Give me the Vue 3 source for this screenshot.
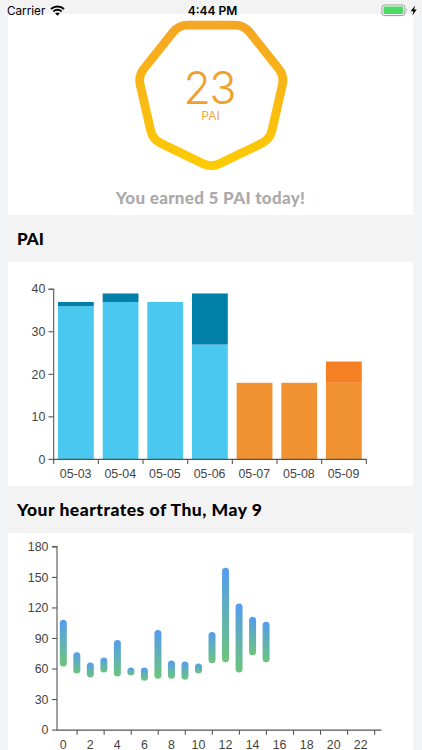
<template>
  <div class="screen">
    <header class="status-bar">
      <div class="carrier">
        <span>Carrier</span>
        <svg class="wifi" width="15" height="11.5" viewBox="0 0 14 11">
          <path d="M0.8 3.9a8.9 8.9 0 0 1 12.4 0" />
          <path d="M3.1 6.2a5.6 5.6 0 0 1 7.8 0" />
          <path class="wifi-dot" d="M4.8 8.1a3.2 3.2 0 0 1 4.4 0L7 10.4z" />
        </svg>
      </div>
      <span class="clock">4:44 PM</span>
      <svg class="battery" width="37" height="14" viewBox="0 0 37 14">
        <rect x="0.9" y="2" width="23" height="10.6" rx="2.6" fill="#fff" stroke="#999" />
        <rect x="2.5" y="3.6" width="19.8" height="7.4" rx="1.2" fill="#4cd964" />
        <path d="M25.3 5.6q1.4 1.5 0 3.4z" fill="#999" />
        <path d="M34.2 2.5 29.6 8.3h2.8l-1.1 4.2 4.4-5.9h-2.7z" fill="#000" />
      </svg>
    </header>

    <section class="card score">
      <svg width="405" height="168" viewBox="0 0 405 168">
        <defs>
          <linearGradient id="ring" x1="0" y1="0" x2="0" y2="1">
            <stop offset="0" stop-color="#f5a623" />
            <stop offset="1" stop-color="#fdcb04" />
          </linearGradient>
        </defs>
        <path :d="heptagon" fill="none" stroke="url(#ring)" stroke-width="8.8" />
        <text class="score-value" x="175.4" y="90.3" textLength="53">23</text>
        <text class="score-unit" x="193.2" y="105.9" textLength="18.6">PAI</text>
      </svg>
      <p class="earned">You earned 5 PAI today!</p>
    </section>

    <h2 class="title">PAI</h2>
    <section class="card">
      <svg class="chart" width="405" height="224" viewBox="0 0 405 224">
        <g v-for="(d, i) in pai" :key="d.day">
          <rect :x="50 + i * 44.66" :y="paiY(d.base)" width="35.8" :height="d.base * 4.255" :fill="d.low ? '#f09232' : '#4bc8ef'" />
          <rect v-if="d.extra" :x="50 + i * 44.66" :y="paiY(d.base + d.extra)" width="35.8" :height="d.extra * 4.255" :fill="d.low ? '#f58024' : '#0080a8'" />
          <text :x="67.6 + i * 44.66" y="216" text-anchor="middle">{{ d.day }}</text>
        </g>
        <path class="axis" d="M40.5 27.3H45.7V197.4H358.3" />
        <path v-for="n in 8" :key="'x' + n" class="axis" :d="`M${45.7 + (n - 1) * 44.66} 197v5`" />
        <g v-for="v in [0, 10, 20, 30, 40]" :key="v">
          <path class="axis" :d="`M40.5 ${paiY(v)}h5`" />
          <text x="37.3" :y="paiY(v) + 4.2" text-anchor="end">{{ v }}</text>
        </g>
      </svg>
    </section>

    <h2 class="title title-wide">Your heartrates of Thu, May 9</h2>
    <section class="card">
      <svg class="chart" width="405" height="217" viewBox="0 0 405 217">
        <defs>
          <linearGradient id="pulse" x1="0" y1="0" x2="0" y2="1">
            <stop offset="0" stop-color="#559cf0" />
            <stop offset="1" stop-color="#6dc57a" />
          </linearGradient>
        </defs>
        <rect
          v-for="([low, high], i) in heartrates"
          :key="i"
          :x="51.8 + i * 13.52"
          :y="rateY(high) - 3.5"
          width="7"
          :height="(high - low) * 1.018 + 7"
          rx="3.5"
          fill="url(#pulse)"
        />
        <path class="axis" d="M44 13.6H49V197.1H373.5" />
        <g v-for="v in [0, 30, 60, 90, 120, 150, 180]" :key="v">
          <path class="axis" :d="`M44 ${rateY(v)}h5`" />
          <text x="40.5" :y="rateY(v) + 4.2" text-anchor="end">{{ v }}</text>
        </g>
        <g v-for="n in 12" :key="'h' + n">
          <path class="axis" :d="`M${69.1 + (n - 1) * 27.05} 197v4.8`" />
          <text :x="55.2 + (n - 1) * 27.05" y="215.6" text-anchor="middle">{{ (n - 1) * 2 }}</text>
        </g>
      </svg>
    </section>
  </div>
</template>

<script setup>
const pai = [
  { day: "05-03", base: 36, extra: 1 },
  { day: "05-04", base: 37, extra: 2 },
  { day: "05-05", base: 37, extra: 0 },
  { day: "05-06", base: 27, extra: 12 },
  { day: "05-07", base: 18, extra: 0, low: true },
  { day: "05-08", base: 18, extra: 0, low: true },
  { day: "05-09", base: 18, extra: 5, low: true },
];

// lowest and highest rate for each hour
const heartrates = [
  [66, 105], [59, 73], [55, 63], [60, 68],
  [56, 85], [57, 58], [52, 58], [54, 95],
  [54, 65], [53, 64], [59, 62], [69, 93],
  [70, 156], [60, 121], [77, 108], [70, 103],
];

const paiY = (v) => 197.4 - v * 4.255;
const rateY = (v) => 197.1 - v * 1.018;

// seven-sided ring with softened corners, point facing down
function roundedPolygon(cx, cy, radius, sides, corner) {
  const points = Array.from({ length: sides }, (_, i) => {
    const a = (i * 2 * Math.PI) / sides;
    return [cx + radius * Math.sin(a), cy + radius * Math.cos(a)];
  });
  const toward = (p, q) => {
    const t = corner / Math.hypot(q[0] - p[0], q[1] - p[1]);
    return `${p[0] + (q[0] - p[0]) * t} ${p[1] + (q[1] - p[1]) * t}`;
  };
  return (
    points
      .map((p, i) => {
        const prev = points[(i + sides - 1) % sides];
        const next = points[(i + 1) % sides];
        return `${i ? "L" : "M"}${toward(p, prev)}Q${p[0]} ${p[1]} ${toward(p, next)}`;
      })
      .join("") + "Z"
  );
}

const heptagon = roundedPolygon(203.3, 78.6, 75, 7, 9);
</script>

<style>
body {
  margin: 0;
  background: #f3f4f7;
}
</style>

<style scoped>
.screen {
  box-sizing: border-box;
  width: 422px;
  height: 750px;
  padding: 0 9px 0 8px;
  overflow: hidden;
  background: #f3f4f7;
  font-family: Inter, "Liberation Sans", sans-serif;
}

.status-bar {
  display: grid;
  grid-template-columns: 1fr auto 1fr;
  align-items: start;
  height: 14px;
  margin: 0 -9px 0 -8px;
  padding: 0 4px 0 7px;
  background: #f3f3f3;
  color: #000;
  font-size: 11.7px;
  line-height: 22px;
}

.carrier {
  display: flex;
  gap: 5px;
}

.wifi {
  margin-top: 5px;
  fill: none;
  stroke: #000;
  stroke-width: 1.9;
}

.wifi-dot {
  fill: #000;
  stroke: none;
}

.clock {
  font-size: 12px;
  font-weight: 600;
}

.battery {
  justify-self: end;
  margin-top: 3px;
}

.status-bar > * {
  position: relative;
  z-index: 1;
}

.card {
  background: #fff;
}

.card svg {
  display: block;
}

.score {
  height: 201px;
}

.score-value {
  fill: #f0a02e;
  font-size: 44.5px;
  font-weight: 300;
}

.score-unit {
  fill: #f0a840;
  font-size: 12px;
}

.earned {
  margin: 0;
  color: #aaa;
  font-family: Lato, sans-serif;
  font-size: 17px;
  font-weight: 900;
  letter-spacing: 0.3px;
  line-height: 32px;
  text-align: center;
}

.title {
  height: 47px;
  margin: 0;
  padding-left: 9px;
  background: #f3f3f3;
  color: #000;
  font-family: Lato, sans-serif;
  font-size: 17px;
  font-weight: 900;
  line-height: 47px;
}

.title-wide {
  font-size: 17.5px;
  letter-spacing: 0.5px;
}

.chart text {
  fill: #444;
  font-family: "Liberation Sans", Arial, sans-serif;
  font-size: 12.4px;
}

.axis {
  fill: none;
  stroke: #555;
  stroke-width: 1.1;
}
</style>
